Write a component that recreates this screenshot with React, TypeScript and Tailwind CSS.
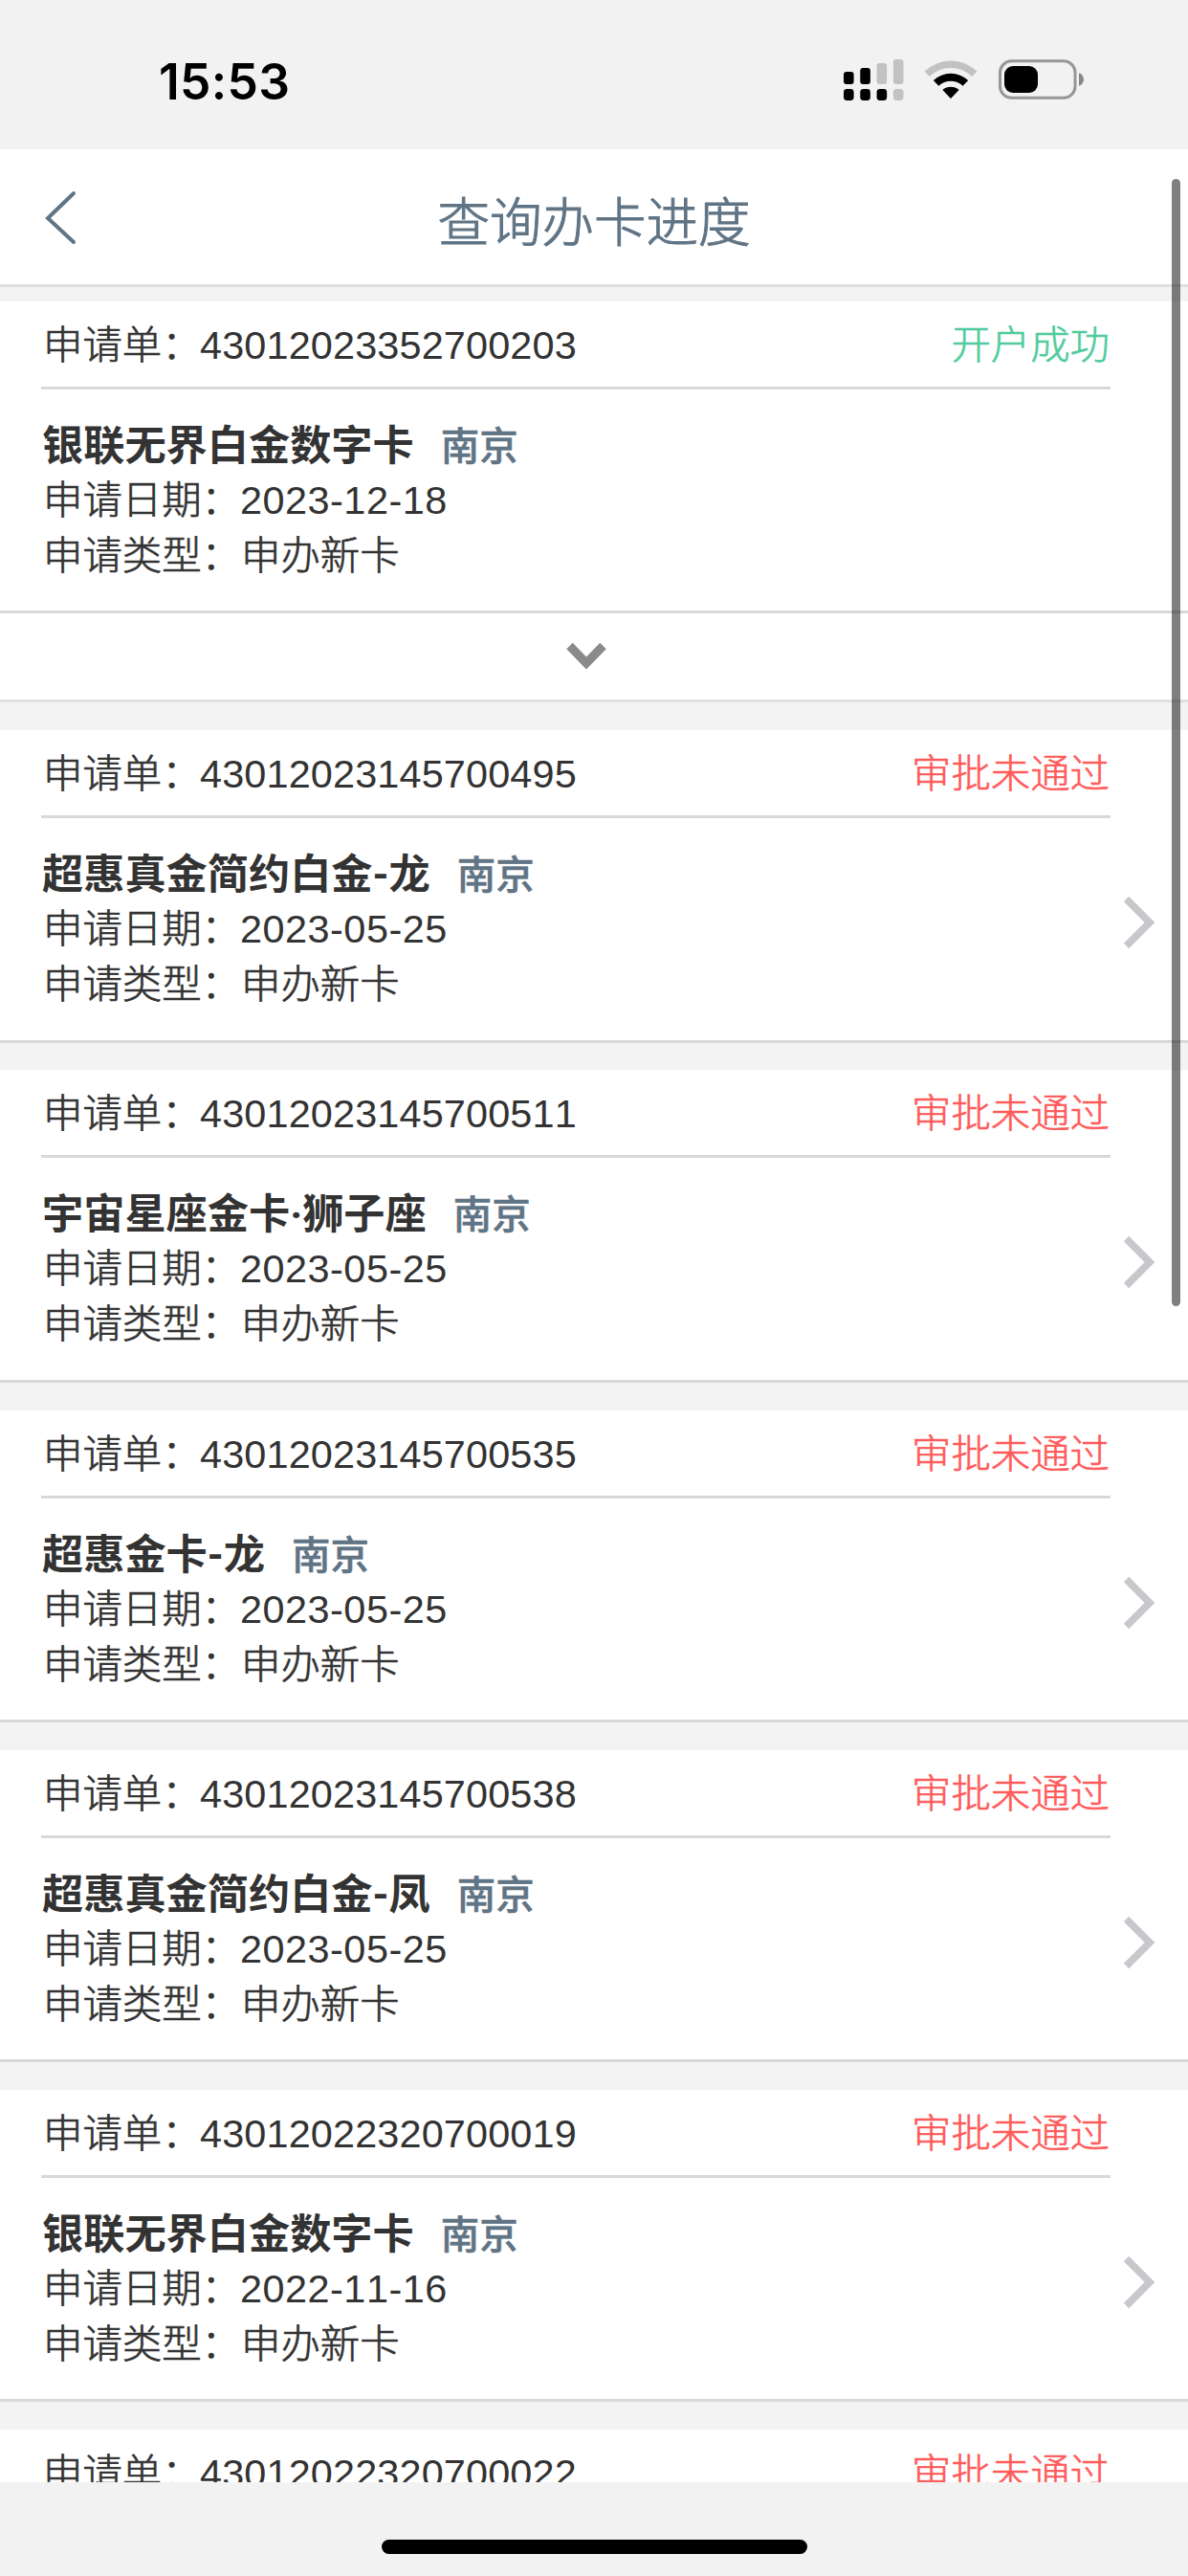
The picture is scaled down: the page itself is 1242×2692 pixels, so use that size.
import clsx from 'clsx';

type Status = 'success' | 'rejected';

interface Application {
  id: string;
  status: Status;
  card: string;
  city: string;
  date: string;
  type: string;
  expandable?: boolean;
}

const STATUS_LABEL: Record<Status, string> = {
  success: '开户成功',
  rejected: '审批未通过',
};

const applications: Application[] = [
  { id: '43012023352700203', status: 'success', card: '银联无界白金数字卡', city: '南京', date: '2023-12-18', type: '申办新卡', expandable: true },
  { id: '43012023145700495', status: 'rejected', card: '超惠真金简约白金-龙', city: '南京', date: '2023-05-25', type: '申办新卡' },
  { id: '43012023145700511', status: 'rejected', card: '宇宙星座金卡·狮子座', city: '南京', date: '2023-05-25', type: '申办新卡' },
  { id: '43012023145700535', status: 'rejected', card: '超惠金卡-龙', city: '南京', date: '2023-05-25', type: '申办新卡' },
  { id: '43012023145700538', status: 'rejected', card: '超惠真金简约白金-凤', city: '南京', date: '2023-05-25', type: '申办新卡' },
  { id: '43012022320700019', status: 'rejected', card: '银联无界白金数字卡', city: '南京', date: '2022-11-16', type: '申办新卡' },
  { id: '43012022320700022', status: 'rejected', card: '银联无界白金数字卡', city: '南京', date: '2022-11-16', type: '申办新卡' },
];

function SignalIcon() {
  return (
    <svg width="63" height="44" viewBox="0 0 63 44">
      <g fill="#000">
        <rect x="0" y="13" width="10.6" height="13" rx="3" />
        <rect x="17.3" y="9" width="10.6" height="17" rx="3" />
        <rect x="0" y="31" width="10.6" height="12" rx="3.4" />
        <rect x="17.3" y="31" width="10.6" height="12" rx="3.4" />
        <rect x="34.6" y="31" width="10.6" height="12" rx="3.4" />
      </g>
      <g fill="#c2c2c2">
        <rect x="34.6" y="4" width="10.6" height="22" rx="3" />
        <rect x="51.9" y="0" width="10.6" height="26" rx="3" />
        <rect x="51.9" y="31" width="10.6" height="12" rx="3.4" />
      </g>
    </svg>
  );
}

function WifiIcon() {
  return (
    <svg width="56" height="42" viewBox="0 0 56 42">
      <path d="M0.6 12.6 A39.5 39.5 0 0 1 55.4 12.6 L50.2 18 A32 32 0 0 0 5.8 18 Z" fill="#c2c2c2" />
      <path d="M9.8 22 A26.5 26.5 0 0 1 46.2 22 L40.6 27.8 A18.5 18.5 0 0 0 15.4 27.8 Z" fill="#000" />
      <path d="M19.4 32 A13 13 0 0 1 36.6 32 L28 41 Z" fill="#000" />
    </svg>
  );
}

function BatteryIcon() {
  return (
    <svg width="90" height="42" viewBox="0 0 90 42">
      <rect x="1.5" y="1.8" width="78.5" height="38.5" rx="12" fill="none" stroke="#979797" strokeWidth="3" />
      <rect x="6" y="7" width="35" height="28" rx="9" fill="#000" />
      <path d="M84 14.2 C90.6 16.4 90.6 25.6 84 27.8 Z" fill="#888" />
    </svg>
  );
}

function StatusBar() {
  return (
    <div className="flex h-[156px] shrink-0 items-start bg-[#f2f2f2] pl-[166px] pt-[62px]">
      <span className="w-[716px] font-['Inter'] text-[51.5px] font-semibold leading-[46px] tracking-[0.3px] text-black">15:53</span>
      <SignalIcon />
      <div className="ml-[21px]">
        <WifiIcon />
      </div>
      <div className="ml-[22px]">
        <BatteryIcon />
      </div>
    </div>
  );
}

function NavBar() {
  return (
    <header className="grid h-[144px] shrink-0 grid-cols-[120px_1fr_120px] items-center border-b-[3px] border-[#e0e0e0] bg-white">
      <button className="pl-[47px]" aria-label="返回">
        <svg width="34" height="58" viewBox="0 0 34 58" fill="none" stroke="#5f7485" strokeWidth="4" strokeLinecap="round">
          <path d="M30 4 L3 30 L30 55" />
        </svg>
      </button>
      <h1 className="pt-[15px] text-center text-[54.5px] font-light leading-[60px] text-[#5f7485] [-webkit-text-stroke:1px]">查询办卡进度</h1>
    </header>
  );
}

function ApplicationCard({ item }: { item: Application }) {
  return (
    <section className="relative h-[326.4px] shrink-0 whitespace-nowrap border-b-[3px] border-[#d8d8d8] bg-white pl-[43px] text-[41.4px] leading-[58px] text-[#333] [font-kerning:none]">
      <div className="flex h-[92px] w-[1118px] justify-between border-b-[3px] border-[#d8d8d8] pl-[2px] pr-px pt-[17px]">
        <div className="flex">
          <span className="w-[164px] font-light [-webkit-text-stroke:0.7px]">申请单：</span>
          <span className="tracking-[0.15px]">{item.id}</span>
        </div>
        <span
          className={clsx(
            'font-light [-webkit-text-stroke:0.6px]',
            item.status === 'success' ? 'text-[#50cb9d]' : 'text-[#ff5b5b]',
          )}
        >
          {STATUS_LABEL[item.status]}
        </span>
      </div>
      <div className="pt-[29px]">
        <div className="flex h-[58px] gap-[28px] pl-px pt-[2px] font-['Roboto','Noto_Sans_CJK_SC',sans-serif]">
          <span className="text-[43.2px] font-bold">{item.card}</span>
          <span className="text-[40.5px] font-medium text-[#5f7485] [-webkit-text-stroke:0.5px]">{item.city}</span>
        </div>
        <div className="flex pl-[2px]">
          <span className="w-[206px] font-light [-webkit-text-stroke:0.7px]">申请日期：</span>
          <span className="tracking-[0.5px]">{item.date}</span>
        </div>
        <div className="flex pl-[2px] font-light [-webkit-text-stroke:0.7px]">
          <span className="w-[207px]">申请类型：</span>
          <span>{item.type}</span>
        </div>
      </div>
      {!item.expandable && (
        <svg className="absolute left-[1174px] top-[173px]" width="34" height="56" viewBox="0 0 34 56" fill="none" stroke="#c7c7cc" strokeWidth="7.5">
          <path d="M3.5 3.5 L28 28 L3.5 52.5" />
        </svg>
      )}
    </section>
  );
}

function ExpandRow() {
  return (
    <div className="flex h-[93px] shrink-0 items-start border-b-[3px] border-[#e0e0e0] bg-white pl-[592px] pt-[30px]">
      <svg width="42" height="29" viewBox="0 0 42 29" fill="none" stroke="#8a8a8a" strokeWidth="9">
        <path d="M3.5 4 L21 22 L38.5 4" />
      </svg>
    </div>
  );
}

export default function App() {
  return (
    <div className="relative flex h-[2692px] w-[1242px] flex-col overflow-hidden bg-[#f3f3f3] font-['Liberation_Sans','Noto_Sans_CJK_SC',sans-serif]">
      <StatusBar />
      <NavBar />
      {/* the last card runs under the home indicator area */}
      <main className="flex h-[2294px] shrink-0 flex-col overflow-hidden pt-[15px]">
        {applications.map((item) => (
          <div key={item.id} className="mb-[28.8px] flex shrink-0 flex-col">
            <ApplicationCard item={item} />
            {item.expandable && <ExpandRow />}
          </div>
        ))}
      </main>
      <footer className="flex flex-1 items-start justify-center bg-[#f2f2f2] pt-[60px]">
        <div className="h-[15px] w-[445px] rounded-full bg-black" />
      </footer>
      <div className="absolute left-[1225px] top-[187px] h-[1178px] w-[9px] rounded-full bg-black/50" />
    </div>
  );
}
